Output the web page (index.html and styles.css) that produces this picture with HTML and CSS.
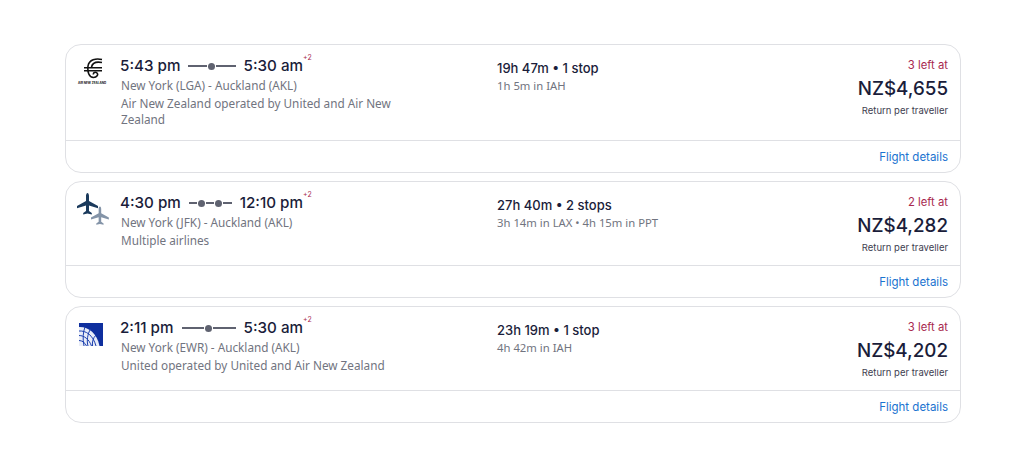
FILE: index.html
```html
<!DOCTYPE html>
<html lang="en">
<head>
<meta charset="utf-8">
<title>Flights</title>
<link rel="stylesheet" href="styles.css">
</head>
<body>
<main class="list">
  <article class="card">
    <div class="body">
      <div class="logo">
        <svg class="koru" width="20" height="21" viewBox="0 0 20 21" fill="none" stroke="#111" stroke-width="1.600">
          <path d="M18 1.500C12 0 5 1.500 4 8 3.300 14 5 19.500 9.500 19.500 13 19.500 14.500 16.500 13 15 11.500 13.600 9 14.500 9.500 16.500"/>
          <path d="M18 4.500C13 3.500 8.500 4.500 7.500 9"/>
          <path d="M0 9.700h18M0 12.700h18" stroke-width="1.500"/>
        </svg>
        <span class="koru-name">AIR NEW ZEALAND</span>
      </div>
      <div class="main">
        <div class="times"><span>5:43 pm</span><span class="line"><i class="seg"></i><i class="dot"></i><i class="seg"></i></span><span class="arrive">5:30 am<sup>+2</sup></span></div>
        <p class="sub">New York (LGA) - Auckland (AKL)</p>
        <p class="sub">Air New Zealand operated by United and Air New Zealand</p>
      </div>
      <div class="dur">
        <div class="dur-t">19h 47m • 1 stop</div>
        <p class="sub">1h 5m in IAH</p>
      </div>
      <div class="price">
        <div class="left">3 left at</div>
        <div class="amt">NZ$4,655</div>
        <div class="per">Return per traveller</div>
      </div>
    </div>
    <div class="foot"><a href="#">Flight details</a></div>
  </article>

  <article class="card">
    <div class="body">
      <div class="logo">
        <svg class="planes" width="33" height="32" viewBox="0 0 33 32">
          <path fill="#8494a8" transform="translate(14 13.500) scale(.85)" d="M10.500 0C11.400 0 12 1.500 12 3V8L21 13V15.200L12 12.600V18L14.800 20V21.500L10.500 20.500 6.200 21.500V20L9 18V12.600L0 15.200V13L9 8V3C9 1.500 9.600 0 10.500 0Z"/>
          <path fill="#1b3a5c" d="M10.500 0C11.400 0 12 1.500 12 3V8L21 13V15.200L12 12.600V18L14.800 20V21.500L10.500 20.500 6.200 21.500V20L9 18V12.600L0 15.200V13L9 8V3C9 1.500 9.600 0 10.500 0Z"/>
        </svg>
      </div>
      <div class="main">
        <div class="times"><span>4:30 pm</span><span class="line"><i class="seg"></i><i class="dot"></i><i class="seg"></i><i class="dot"></i><i class="seg"></i></span><span class="arrive">12:10 pm<sup>+2</sup></span></div>
        <p class="sub">New York (JFK) - Auckland (AKL)</p>
        <p class="sub">Multiple airlines</p>
      </div>
      <div class="dur">
        <div class="dur-t">27h 40m • 2 stops</div>
        <p class="sub">3h 14m in LAX • 4h 15m in PPT</p>
      </div>
      <div class="price">
        <div class="left">2 left at</div>
        <div class="amt">NZ$4,282</div>
        <div class="per">Return per traveller</div>
      </div>
    </div>
    <div class="foot"><a href="#">Flight details</a></div>
  </article>

  <article class="card">
    <div class="body">
      <div class="logo">
        <svg class="globe" width="24" height="23" viewBox="0 0 24 23">
          <rect width="24" height="23" fill="#0f2f9e"/>
          <path fill="#e8ecf8" d="M0 4C9 3.500 18 10 20.500 23H0z"/>
          <g fill="none" stroke="#1b3fae" stroke-width="1">
            <path d="M0 8C7 7.500 14 12 17 23"/>
            <path d="M0 12.500C5 12.500 10 16 12.500 23"/>
            <path d="M0 17.500C3 17.500 6 19.500 7.500 23"/>
            <path d="M6 4C4 9 3.500 16 5 23"/>
            <path d="M11.500 6C8.500 11 7.500 18 9 23"/>
            <path d="M17 12C14 15 13 19 13.500 23"/>
          </g>
        </svg>
      </div>
      <div class="main">
        <div class="times"><span>2:11 pm</span><span class="line"><i class="seg"></i><i class="dot"></i><i class="seg"></i></span><span class="arrive">5:30 am<sup>+2</sup></span></div>
        <p class="sub">New York (EWR) - Auckland (AKL)</p>
        <p class="sub">United operated by United and Air New Zealand</p>
      </div>
      <div class="dur">
        <div class="dur-t">23h 19m • 1 stop</div>
        <p class="sub">4h 42m in IAH</p>
      </div>
      <div class="price">
        <div class="left">3 left at</div>
        <div class="amt">NZ$4,202</div>
        <div class="per">Return per traveller</div>
      </div>
    </div>
    <div class="foot"><a href="#">Flight details</a></div>
  </article>
</main>
</body>
</html>
```
FILE: styles.css
```css
* { box-sizing: border-box; }
html, body { margin: 0; background: #fff; }
body { font-family: Inter, "Liberation Sans", sans-serif; color: #1a1d3a; }
.list { display: flex; flex-direction: column; gap: 8px; padding: 44px 65px 0; }
.card { border: 1px solid #dfe0e4; border-radius: 16px; overflow: hidden; }
.body { display: grid; grid-template-columns: 44px 376px 1fr auto; padding: 12px 11px 11px; min-height: 83px; }
.logo { display: flex; flex-direction: column; align-items: flex-start; }
.koru { margin-left: 7px; margin-top: 1px; }
.koru-name { font-size: 3px; line-height: 4px; font-weight: 700; color: #111; margin-top: 2px; white-space: nowrap; margin-left: 1px; }
.planes { margin-top: -1px; }
.globe { margin: 4px 0 0 2px; }
.main { width: 290px; padding-bottom: 2px; }
.times { display: flex; align-items: center; gap: 8px; width: 183px; margin-left: -1px; font-size: 15.200px; font-weight: 500; line-height: 18px; height: 18px; white-space: nowrap; }
.arrive { position: relative; }
sup { position: absolute; left: 100%; top: -4px; font-size: 7px; line-height: 9px; color: #a8294f; font-weight: 400; }
.line { display: flex; align-items: center; gap: 1px; flex: 1; }
.seg { display: block; height: 2px; background: #5f6270; flex: 1; }
.dot { display: block; width: 7px; height: 7px; border-radius: 50%; background: #5f6270; flex: none; }
.sub { margin: 2px 0 0; font-family: "Noto Sans", sans-serif; font-size: 11.750px; line-height: 16px; color: #717480; }
.dur-t { font-size: 13px; font-weight: 500; line-height: 18px; margin-top: 2px; }
.dur .sub { margin-top: 1px; font-size: 11.300px; }
.price { text-align: right; padding-right: 1px; }
.left { font-size: 11.300px; line-height: 16px; color: #a8294f; }
.amt { font-size: 18.800px; font-weight: 500; line-height: 24px; margin-top: 4px; }
.per { font-size: 9.500px; line-height: 12px; color: #3d4050; margin-top: 4px; }
.foot { border-top: 1px solid #dfe0e4; height: 32px; padding-top: 1px; display: flex; align-items: center; justify-content: flex-end; padding-right: 12px; }
.foot a { font-size: 11.500px; color: #1a73d0; text-decoration: none; }
```
